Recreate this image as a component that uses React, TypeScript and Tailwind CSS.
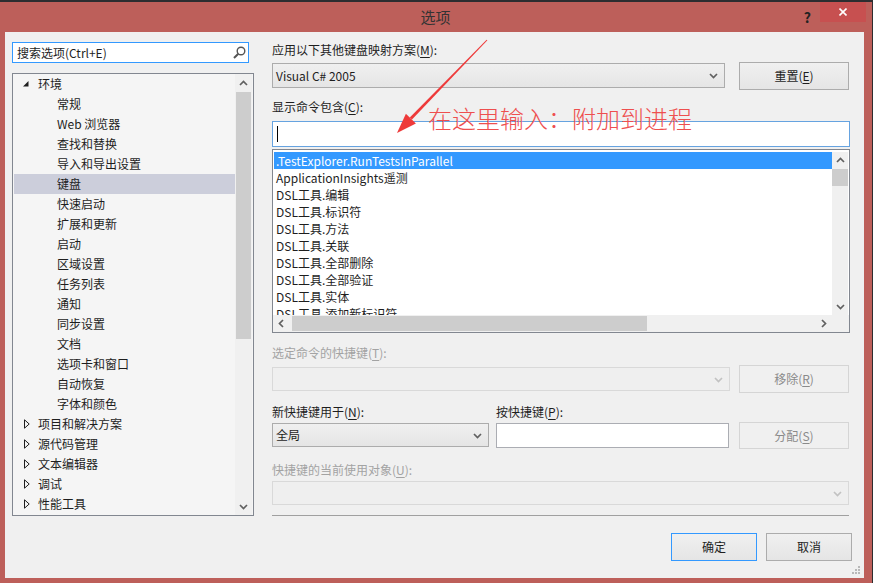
import React from 'react';

const envItems = [
  '常规',
  'Web 浏览器',
  '查找和替换',
  '导入和导出设置',
  '键盘',
  '快速启动',
  '扩展和更新',
  '启动',
  '区域设置',
  '任务列表',
  '通知',
  '同步设置',
  '文档',
  '选项卡和窗口',
  '自动恢复',
  '字体和颜色',
];
const groups = ['项目和解决方案', '源代码管理', '文本编辑器', '调试', '性能工具'];
const commands = [
  '.TestExplorer.RunTestsInParallel',
  'ApplicationInsights遥测',
  'DSL工具.编辑',
  'DSL工具.标识符',
  'DSL工具.方法',
  'DSL工具.关联',
  'DSL工具.全部删除',
  'DSL工具.全部验证',
  'DSL工具.实体',
  'DSL工具.添加新标识符',
];

type Dir = 'up' | 'down' | 'left' | 'right';

function Chevron({ dir, color = '#606060' }: { dir: Dir; color?: string }) {
  const d = {
    up: 'M1 6 L4.5 2.5 L8 6',
    down: 'M1 3 L4.5 6.5 L8 3',
    left: 'M6 1 L2.5 4.5 L6 8',
    right: 'M3 1 L6.5 4.5 L3 8',
  }[dir];
  return (
    <svg width="9" height="9" viewBox="0 0 9 9">
      <path d={d} stroke={color} strokeWidth="1.7" fill="none" />
    </svg>
  );
}

function Btn({
  children,
  className = '',
  primary,
  disabled,
}: {
  children: React.ReactNode;
  className?: string;
  primary?: boolean;
  disabled?: boolean;
}) {
  return (
    <div
      className={`flex items-center justify-center border ${
        disabled
          ? 'border-[#d5d5d5] bg-[#f0f0f0] text-[#8a8a8a]'
          : primary
          ? 'border-[#3399ff] bg-gradient-to-b from-[#f0f0f0] to-[#e5e5e5] text-[#1e1e1e]'
          : 'border-[#acacac] bg-gradient-to-b from-[#f0f0f0] to-[#e5e5e5] text-[#1e1e1e]'
      } ${className}`}
    >
      {children}
    </div>
  );
}

function Combo({
  text,
  className = '',
  disabled,
}: {
  text?: string;
  className?: string;
  disabled?: boolean;
}) {
  return (
    <div
      className={`flex items-center border pl-[3px] pr-[6px] ${
        disabled
          ? 'border-[#d9d9d9] bg-[#efefef]'
          : 'border-[#acacac] bg-gradient-to-b from-[#f0f0f0] to-[#e5e5e5]'
      } ${className}`}
    >
      <span className="flex-1 text-[#1e1e1e]">{text}</span>
      <Chevron dir="down" color={disabled ? '#c2c2c2' : '#606060'} />
    </div>
  );
}

function Key({ k }: { k: string }) {
  return <span className="underline underline-offset-2">{k}</span>;
}

function Tree() {
  return (
    <div className="mt-[10px] h-[443px] border border-[#828790] bg-[#f5f5f5] flex">
      <div className="flex-1 pl-[1px] overflow-hidden">
        <div className="h-[20px] flex items-center">
          <span className="w-[24px] pl-[9px]">
            <svg width="6" height="6" viewBox="0 0 6 6" className="block">
              <path d="M5.5 0 L5.5 5.5 L0 5.5 Z" fill="#1e1e1e" />
            </svg>
          </span>
          <span>环境</span>
        </div>
        {envItems.map((item) => (
          <div
            key={item}
            className={`h-[20px] flex items-center pl-[43px] ${item === '键盘' ? 'bg-[#cccedb]' : ''}`}
          >
            {item}
          </div>
        ))}
        {groups.map((item) => (
          <div key={item} className="h-[20px] flex items-center">
            <span className="w-[24px] pl-[10px]">
              <svg width="6" height="10" viewBox="0 0 6 10" className="block">
                <path d="M0.5 0.8 L5.2 5 L0.5 9.2 Z" fill="none" stroke="#1e1e1e" strokeWidth="1" />
              </svg>
            </span>
            <span>{item}</span>
          </div>
        ))}
      </div>
      <div className="w-[17px] bg-[#f0f0f0] flex flex-col mr-[1px]">
        <div className="h-[18px] flex items-center justify-center">
          <Chevron dir="up" />
        </div>
        <div className="h-[247px] mx-[1px] bg-[#cdcdcd]" />
        <div className="flex-1" />
        <div className="h-[18px] flex items-center justify-center">
          <Chevron dir="down" />
        </div>
      </div>
    </div>
  );
}

function CommandList() {
  return (
    <div className="mt-[2px] h-[184px] border border-[#828790] bg-white flex flex-col pt-[2px]">
      <div className="flex h-[163px]">
        <div className="flex-1 ml-[1px] overflow-hidden">
          {commands.map((c, i) => (
            <div
              key={c}
              className={`h-[17px] flex items-center pl-[2px] whitespace-nowrap ${
                i === 0 ? 'bg-[#3399ff] text-white' : 'text-[#1e1e1e]'
              }`}
            >
              {c}
            </div>
          ))}
        </div>
        <div className="w-[16px] bg-[#f0f0f0] flex flex-col mr-[1px]">
          <div className="h-[17px] flex items-center justify-center">
            <Chevron dir="up" />
          </div>
          <div className="h-[17px] bg-[#cdcdcd]" />
          <div className="flex-1" />
          <div className="h-[17px] flex items-center justify-center">
            <Chevron dir="down" />
          </div>
        </div>
      </div>
      <div className="flex h-[17px] bg-[#f0f0f0]">
        <div className="w-[17px] flex items-center justify-center">
          <Chevron dir="left" />
        </div>
        <div className="w-[355px] ml-[2px] my-[1px] bg-[#cdcdcd]" />
        <div className="flex-1" />
        <div className="w-[17px] flex items-center justify-center">
          <Chevron dir="right" />
        </div>
        <div className="w-[17px]" />
      </div>
    </div>
  );
}

export default function App(): React.JSX.Element {
  return (
    <div className="relative w-[873px] h-[583px] bg-[#bd5f5a] flex flex-col overflow-hidden font-['Noto_Sans_CJK_SC',sans-serif] text-[12px] text-[#1e1e1e]">
      <div className="h-[2px] bg-[#2d2d30]" />
      <div className="relative h-[30px] flex items-center justify-center">
        <span className="text-[15px] text-[#333333] ml-[-2px]">选项</span>
        <span className="absolute right-[62px] top-[5px] text-[14px] font-bold text-[#222222]">?</span>
        <div className="absolute right-[7px] top-0 w-[46px] h-[20px] bg-[#c75050] flex items-center justify-center">
          <svg width="8" height="8" viewBox="0 0 8 8">
            <path d="M0.5 0.5 L7.5 7.5 M7.5 0.5 L0.5 7.5" stroke="#ffffff" strokeWidth="1.6" />
          </svg>
        </div>
      </div>
      <div className="relative ml-[5px] w-[859px] h-[546px] bg-[#f0f0f0] flex pl-[7px] pt-[10px]">
        <div className="w-[242px] flex flex-col">
          <div className="w-[237px] h-[21px] border border-[#3399ff] bg-white flex items-center pl-[4px] pr-[2px]">
            <span className="flex-1">搜索选项(Ctrl+E)</span>
            <svg width="13" height="13" viewBox="0 0 13 13">
              <circle cx="8" cy="5" r="3.8" stroke="#555555" strokeWidth="1.4" fill="none" />
              <path d="M5.3 7.7 L1 12" stroke="#555555" strokeWidth="2" />
            </svg>
          </div>
          <Tree />
        </div>

        <div className="ml-[18px] w-[578px] flex flex-col">
          <div className="h-[16px] leading-[16px]">
            应用以下其他键盘映射方案(<Key k="M" />):
          </div>
          <div className="mt-[4px] flex items-start h-[28px]">
            <Combo text="Visual C# 2005" className="mt-[1px] w-[453px] h-[25px]" />
            <Btn className="ml-[14px] w-[110px] h-[28px]">
              <span>
                重置(<Key k="E" />)
              </span>
            </Btn>
          </div>
          <div className="mt-[9px] h-[16px] leading-[16px]">
            显示命令包含(<Key k="C" />):
          </div>
          <div className="mt-[6px] h-[26px] border border-[#66a3e0] bg-white flex items-center pl-[4px]">
            <div className="w-[1px] h-[16px] bg-black" />
          </div>
          <CommandList />
          <div className="mt-[12px] h-[16px] leading-[16px] text-[#a3a3a3]">
            选定命令的快捷键(<Key k="T" />):
          </div>
          <div className="mt-[4px] flex items-start h-[28px]">
            <Combo disabled className="mt-[2px] w-[458px] h-[24px]" />
            <Btn disabled className="ml-[9px] w-[110px] h-[28px]">
              <span>
                移除(<Key k="R" />)
              </span>
            </Btn>
          </div>
          <div className="mt-[11px] h-[16px] leading-[16px] flex">
            <span className="w-[224px]">
              新快捷键用于(<Key k="N" />):
            </span>
            <span>
              按快捷键(<Key k="P" />):
            </span>
          </div>
          <div className="mt-[2px] flex items-start h-[27px]">
            <Combo text="全局" className="mt-[1px] w-[217px] h-[24px]" />
            <div className="ml-[7px] mt-[1px] w-[233px] h-[25px] border border-[#abadb3] bg-white" />
            <Btn disabled className="ml-[10px] w-[110px] h-[27px]">
              <span>
                分配(<Key k="S" />)
              </span>
            </Btn>
          </div>
          <div className="mt-[13px] h-[16px] leading-[16px] text-[#a3a3a3]">
            快捷键的当前使用对象(<Key k="U" />):
          </div>
          <Combo disabled className="mt-[3px] w-[577px] h-[24px]" />
          <div className="mt-[10px] w-[577px] h-[1px] bg-[#a0a0a0]" />
          <div className="mt-[17px] w-[580px] flex justify-end gap-[9px]">
            <Btn primary className="w-[86px] h-[28px]">
              确定
            </Btn>
            <Btn className="w-[86px] h-[28px]">取消</Btn>
          </div>
        </div>

        <svg className="absolute right-[4px] bottom-[4px]" width="8" height="8" viewBox="0 0 8 8">
          <rect x="6" y="0" width="2" height="2" fill="#b8b8b8" />
          <rect x="3" y="3" width="2" height="2" fill="#b8b8b8" />
          <rect x="6" y="3" width="2" height="2" fill="#b8b8b8" />
          <rect x="0" y="6" width="2" height="2" fill="#b8b8b8" />
          <rect x="3" y="6" width="2" height="2" fill="#b8b8b8" />
          <rect x="6" y="6" width="2" height="2" fill="#b8b8b8" />
        </svg>
      </div>
      <div className="absolute right-0 top-0 w-[1px] h-full bg-[#2d2d30]" />

      <svg className="absolute left-0 top-0 pointer-events-none" width="873" height="583" viewBox="0 0 873 583">
        <polygon points="487.4,40.3 486.6,39.7 409.8,117.6 412,119.6" fill="#ee3a3a" />
        <polygon points="397,133 405.9,113.7 415.9,123.5" fill="#ee3a3a" />
      </svg>
      <div className="absolute left-[428px] top-[106px] text-[24px] leading-[24px] font-light text-[#ee4f4f] whitespace-nowrap pointer-events-none">
        在这里输入：附加到进程
      </div>
    </div>
  );
}
